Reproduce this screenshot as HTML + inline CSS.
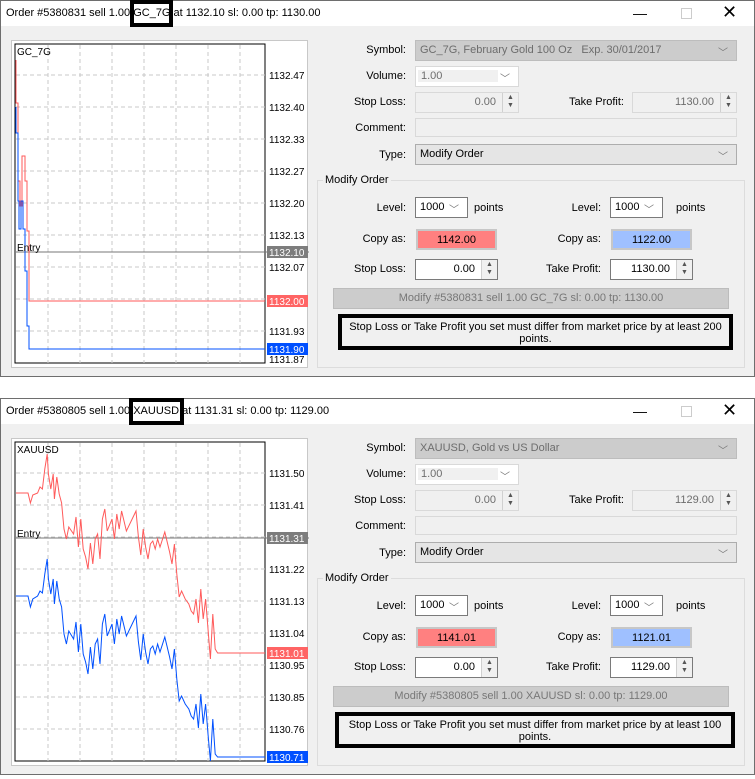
<!DOCTYPE html>
<html><head><meta charset="utf-8"><style>
*{box-sizing:border-box;margin:0;padding:0}
body{width:755px;height:779px;background:#fff;position:relative;overflow:hidden;font-family:"Liberation Sans",Arial,sans-serif;font-size:11px;color:#000}
.dlg{position:absolute;left:0;width:755px;height:377px;background:#f0f0f0;border:1px solid #6e6e6e}
.tb{position:absolute;left:0;top:0;width:753px;height:25px;background:#fff}
.tt{position:absolute;left:5px;top:6px;font-size:11px;white-space:nowrap}
.hl{position:absolute;top:-1px;height:27px;border:4px solid #000}
.a{position:absolute;white-space:nowrap}
.lab{position:absolute;text-align:right;width:120px;white-space:nowrap}
.f{position:absolute;border:1px solid #d9d9d9;background:#f0f0f0;color:#6d6d6d;padding:3px 4px;white-space:nowrap;overflow:hidden}
.dis{background:#cccccc;border-color:#bdbdbd}
.w{background:#fff;border-color:#7a7a7a;color:#000}
.sp{position:absolute;right:0;top:0;width:16px;height:100%;border-left:1px solid #d0d0d0;background:#f0f0f0;font-size:7px;line-height:8px;text-align:center;color:#555;padding-top:1px}
.chev{position:absolute;right:8px;top:3px;color:#777;font-size:10px}
.grp{position:absolute;border:1px solid #dcdcdc}
.chart{position:absolute;left:10px;top:39px;width:297px;height:328px;background:#fff;border:1px solid #c8c8c8}
.msg{position:absolute;border:4px solid #000;background:#f0f0f0;text-align:center;line-height:12px;padding-top:3px}
</style></head><body>

<!-- Dialog 1 -->
<div class="dlg" style="top:0">
 <div class="tb">
  <div class="tt">Order #5380831 sell 1.00 GC_7G at 1132.10 sl: 0.00 tp: 1130.00</div>
  <div class="hl" style="left:129px;width:43px"></div>
  <div class="a" style="left:632px;top:4px;font-size:14px">—</div>
  <div class="a" style="left:680px;top:7px;width:11px;height:11px;border:1px solid #ccc"></div>
  <div class="a" style="left:721px;top:1px;font-size:18px;font-weight:300">✕</div>
 </div>
 <div class="chart">
  <svg width="297" height="328" style="position:absolute;left:0;top:0">
   <rect x="3" y="3" width="250" height="319" fill="#fff" stroke="#000"/>
   <g stroke="#c8c8c8" stroke-dasharray="4,3">
    <line x1="36" y1="4" x2="36" y2="322"/><line x1="68" y1="4" x2="68" y2="322"/><line x1="100" y1="4" x2="100" y2="322"/><line x1="132" y1="4" x2="132" y2="322"/><line x1="164" y1="4" x2="164" y2="322"/><line x1="196" y1="4" x2="196" y2="322"/><line x1="228" y1="4" x2="228" y2="322"/>
    <line x1="4" y1="34" x2="253" y2="34"/><line x1="4" y1="66" x2="253" y2="66"/><line x1="4" y1="98" x2="253" y2="98"/><line x1="4" y1="130" x2="253" y2="130"/><line x1="4" y1="162" x2="253" y2="162"/><line x1="4" y1="194" x2="253" y2="194"/><line x1="4" y1="226" x2="253" y2="226"/><line x1="4" y1="258" x2="253" y2="258"/><line x1="4" y1="290" x2="253" y2="290"/>
   </g>
   <line x1="4" y1="211" x2="297" y2="211" stroke="#777"/>
   <polyline fill="none" stroke="#ff5a5a" points="4,19 4,62 6,62 6,140 8,140 8,165 10,165 10,115 13,115 13,140 15,140 15,190 17,190 17,260 253,260"/>
   <polyline fill="none" stroke="#0050ff" points="4,66 4,92 6,92 6,160 7,160 7,188 9,188 9,160 11,160 11,188 13,188 13,230 15,230 15,285 17,285 17,308 253,308"/>
   <g font-size="10" font-family="Liberation Sans" fill="#000">
    <text x="5" y="14">GC_7G</text><text x="5" y="210">Entry</text>
    <text x="257" y="38">1132.47</text><text x="257" y="70">1132.40</text><text x="257" y="102">1132.33</text><text x="257" y="134">1132.27</text><text x="257" y="166">1132.20</text><text x="257" y="198">1132.13</text><text x="257" y="230">1132.07</text><text x="257" y="294">1131.93</text><text x="257" y="322">1131.87</text>
    <rect x="255" y="205" width="41" height="12" fill="#7d7d7d"/><text x="257" y="215" fill="#fff">1132.10</text>
    <rect x="255" y="254" width="41" height="12" fill="#ff6464"/><text x="257" y="264" fill="#fff">1132.00</text>
    <rect x="255" y="302" width="41" height="12" fill="#0050ff"/><text x="257" y="312" fill="#fff">1131.90</text>
   </g>
  </svg>
 </div>
 <div class="lab" style="left:285px;top:43px">Symbol:</div>
 <div class="f dis" style="left:414px;top:39px;width:322px;height:21px">GC_7G, February Gold 100 Oz &nbsp; Exp. 30/01/2017<span class="chev">﹀</span></div>
 <div class="lab" style="left:285px;top:69px">Volume:</div>
 <div class="f" style="left:414px;top:65px;width:104px;height:21px;background:#fff"><span style="background:#f0f0f0;display:inline-block;width:80px;padding-left:3px;margin-left:-2px">1.00</span><span class="chev">﹀</span></div>
 <div class="lab" style="left:285px;top:95px">Stop Loss:</div>
 <div class="f" style="left:414px;top:91px;width:104px;height:21px;text-align:right;padding-right:22px">0.00<div class="sp">▲<br>▼</div></div>
 <div class="lab" style="left:503px;top:95px">Take Profit:</div>
 <div class="f" style="left:631px;top:91px;width:105px;height:21px;text-align:right;padding-right:22px">1130.00<div class="sp">▲<br>▼</div></div>
 <div class="lab" style="left:285px;top:121px">Comment:</div>
 <div class="f" style="left:414px;top:117px;width:322px;height:19px"></div>
 <div class="lab" style="left:285px;top:148px">Type:</div>
 <div class="f" style="left:414px;top:143px;width:322px;height:21px;background:#e5e5e5;border-color:#adadad;color:#000">Modify Order<span class="chev">﹀</span></div>
 <div class="grp" style="left:316px;top:179px;width:428px;height:188px"></div>
 <div class="a" style="left:322px;top:173px;background:#f0f0f0;padding:0 2px">Modify Order</div>
 <div class="lab" style="left:285px;top:201px">Level:</div>
 <div class="f w" style="left:414px;top:196px;width:53px;height:21px">1000<span class="chev">﹀</span></div>
 <div class="a" style="left:473px;top:201px">points</div>
 <div class="lab" style="left:480px;top:201px">Level:</div>
 <div class="f w" style="left:609px;top:196px;width:53px;height:21px">1000<span class="chev">﹀</span></div>
 <div class="a" style="left:675px;top:201px">points</div>
 <div class="lab" style="left:285px;top:232px">Copy as:</div>
 <div class="f" style="left:415px;top:228px;width:81px;height:21px;background:#ff8080;border:2px solid #c7c7c7;color:#000;text-align:center">1142.00</div>
 <div class="lab" style="left:480px;top:232px">Copy as:</div>
 <div class="f" style="left:610px;top:228px;width:81px;height:21px;background:#9fc0ff;border:2px solid #c7c7c7;color:#000;text-align:center">1122.00</div>
 <div class="lab" style="left:285px;top:262px">Stop Loss:</div>
 <div class="f w" style="left:414px;top:258px;width:83px;height:21px;text-align:right;padding-right:22px">0.00<div class="sp">▲<br>▼</div></div>
 <div class="lab" style="left:480px;top:262px">Take Profit:</div>
 <div class="f w" style="left:609px;top:258px;width:83px;height:21px;text-align:right;padding-right:22px">1130.00<div class="sp">▲<br>▼</div></div>
 <div class="f" style="left:332px;top:287px;width:396px;height:21px;background:#cccccc;border-color:#bcbcbc;color:#777;text-align:center">Modify #5380831 sell 1.00 GC_7G sl: 0.00 tp: 1130.00</div>
 <div class="msg" style="left:337px;top:313px;width:395px;height:36px">Stop Loss or Take Profit you set must differ from market price by at least 200<br>points.</div>
</div>

<!-- Dialog 2 -->
<div class="dlg" style="top:398px">
 <div class="tb">
  <div class="tt">Order #5380805 sell 1.00 XAUUSD at 1131.31 sl: 0.00 tp: 1129.00</div>
  <div class="hl" style="left:128px;width:55px"></div>
  <div class="a" style="left:632px;top:4px;font-size:14px">—</div>
  <div class="a" style="left:680px;top:7px;width:11px;height:11px;border:1px solid #ccc"></div>
  <div class="a" style="left:721px;top:1px;font-size:18px;font-weight:300">✕</div>
 </div>
 <div class="chart">
  <svg width="297" height="328" style="position:absolute;left:0;top:0">
   <rect x="3" y="3" width="250" height="319" fill="#fff" stroke="#000"/>
   <g stroke="#c8c8c8" stroke-dasharray="4,3">
    <line x1="36" y1="4" x2="36" y2="322"/><line x1="68" y1="4" x2="68" y2="322"/><line x1="100" y1="4" x2="100" y2="322"/><line x1="132" y1="4" x2="132" y2="322"/><line x1="164" y1="4" x2="164" y2="322"/><line x1="196" y1="4" x2="196" y2="322"/><line x1="228" y1="4" x2="228" y2="322"/>
    <line x1="4" y1="34" x2="253" y2="34"/><line x1="4" y1="66" x2="253" y2="66"/><line x1="4" y1="98" x2="253" y2="98"/><line x1="4" y1="130" x2="253" y2="130"/><line x1="4" y1="162" x2="253" y2="162"/><line x1="4" y1="194" x2="253" y2="194"/><line x1="4" y1="226" x2="253" y2="226"/><line x1="4" y1="258" x2="253" y2="258"/><line x1="4" y1="290" x2="253" y2="290"/>
   </g>
   <line x1="4" y1="99" x2="297" y2="99" stroke="#777"/>
   <g transform="translate(-0.8,0) scale(1.2,1)">
   <polyline fill="none" stroke="#ff5a5a" vector-effect="non-scaling-stroke" points="4,54 14,54 16,64 18,56 22,54 24,48 26,50 28,30 30,15 31,35 33,50 35,35 36,60 38,38 40,55 42,64 44,90 46,100 48,88 52,95 54,78 56,108 58,80 60,110 62,118 64,130 66,104 68,125 70,100 72,95 74,120 76,80 78,70 80,92 84,80 86,100 88,75 90,90 92,72 96,92 100,82 104,72 106,98 108,116 110,90 112,108 114,120 116,105 118,102 120,110 122,100 124,108 128,93 132,113 134,125 136,105 138,135 140,158 142,152 145,160 148,165 150,172 152,175 154,160 156,184 158,150 160,180 162,160 164,190 166,220 168,175 170,210 172,214 211.5,214"/>
   <polyline fill="none" stroke="#0050ff" vector-effect="non-scaling-stroke" points="4,157 14,157 16,168 18,160 22,157 24,152 26,154 28,135 30,120 31,140 33,155 35,140 36,165 38,142 40,160 42,168 44,195 46,205 48,192 52,200 54,183 56,213 58,185 60,215 62,223 64,235 66,208 68,230 70,205 72,200 74,225 76,185 78,175 80,197 84,185 86,205 88,180 90,195 92,177 96,197 100,187 104,177 106,203 108,221 110,195 112,213 114,225 116,210 118,207 120,215 122,205 124,213 128,198 132,218 134,230 136,210 138,240 140,262 142,257 145,265 148,270 150,277 152,280 154,265 156,289 158,255 160,285 162,265 164,295 166,322 168,280 170,315 172,318 211.5,318"/>
   </g>
   <g font-size="10" font-family="Liberation Sans" fill="#000">
    <text x="5" y="14">XAUUSD</text><text x="5" y="98">Entry</text>
    <text x="257" y="38">1131.50</text><text x="257" y="70">1131.41</text><text x="257" y="134">1131.22</text><text x="257" y="166">1131.13</text><text x="257" y="198">1131.04</text><text x="257" y="230">1130.95</text><text x="257" y="262">1130.85</text><text x="257" y="294">1130.76</text><text x="257" y="322">1130.67</text>
    <rect x="255" y="93" width="41" height="12" fill="#7d7d7d"/><text x="257" y="103" fill="#fff">1131.31</text>
    <rect x="255" y="208" width="41" height="12" fill="#ff6464"/><text x="257" y="218" fill="#fff">1131.01</text>
    <rect x="255" y="312" width="41" height="12" fill="#0050ff"/><text x="257" y="322" fill="#fff">1130.71</text>
   </g>
  </svg>
 </div>
 <div class="lab" style="left:285px;top:43px">Symbol:</div>
 <div class="f dis" style="left:414px;top:39px;width:322px;height:21px">XAUUSD, Gold vs US Dollar<span class="chev">﹀</span></div>
 <div class="lab" style="left:285px;top:69px">Volume:</div>
 <div class="f" style="left:414px;top:65px;width:104px;height:21px;background:#fff"><span style="background:#f0f0f0;display:inline-block;width:80px;padding-left:3px;margin-left:-2px">1.00</span><span class="chev">﹀</span></div>
 <div class="lab" style="left:285px;top:95px">Stop Loss:</div>
 <div class="f" style="left:414px;top:91px;width:104px;height:21px;text-align:right;padding-right:22px">0.00<div class="sp">▲<br>▼</div></div>
 <div class="lab" style="left:503px;top:95px">Take Profit:</div>
 <div class="f" style="left:631px;top:91px;width:105px;height:21px;text-align:right;padding-right:22px">1129.00<div class="sp">▲<br>▼</div></div>
 <div class="lab" style="left:285px;top:121px">Comment:</div>
 <div class="f" style="left:414px;top:117px;width:322px;height:19px"></div>
 <div class="lab" style="left:285px;top:148px">Type:</div>
 <div class="f" style="left:414px;top:143px;width:322px;height:21px;background:#e5e5e5;border-color:#adadad;color:#000">Modify Order<span class="chev">﹀</span></div>
 <div class="grp" style="left:316px;top:179px;width:428px;height:188px"></div>
 <div class="a" style="left:322px;top:173px;background:#f0f0f0;padding:0 2px">Modify Order</div>
 <div class="lab" style="left:285px;top:201px">Level:</div>
 <div class="f w" style="left:414px;top:196px;width:53px;height:21px">1000<span class="chev">﹀</span></div>
 <div class="a" style="left:473px;top:201px">points</div>
 <div class="lab" style="left:480px;top:201px">Level:</div>
 <div class="f w" style="left:609px;top:196px;width:53px;height:21px">1000<span class="chev">﹀</span></div>
 <div class="a" style="left:675px;top:201px">points</div>
 <div class="lab" style="left:285px;top:232px">Copy as:</div>
 <div class="f" style="left:415px;top:228px;width:81px;height:21px;background:#ff8080;border:2px solid #c7c7c7;color:#000;text-align:center">1141.01</div>
 <div class="lab" style="left:480px;top:232px">Copy as:</div>
 <div class="f" style="left:610px;top:228px;width:81px;height:21px;background:#9fc0ff;border:2px solid #c7c7c7;color:#000;text-align:center">1121.01</div>
 <div class="lab" style="left:285px;top:262px">Stop Loss:</div>
 <div class="f w" style="left:414px;top:258px;width:83px;height:21px;text-align:right;padding-right:22px">0.00<div class="sp">▲<br>▼</div></div>
 <div class="lab" style="left:480px;top:262px">Take Profit:</div>
 <div class="f w" style="left:609px;top:258px;width:83px;height:21px;text-align:right;padding-right:22px">1129.00<div class="sp">▲<br>▼</div></div>
 <div class="f" style="left:332px;top:287px;width:396px;height:21px;background:#cccccc;border-color:#bcbcbc;color:#777;text-align:center">Modify #5380805 sell 1.00 XAUUSD sl: 0.00 tp: 1129.00</div>
 <div class="msg" style="left:334px;top:313px;width:400px;height:36px">Stop Loss or Take Profit you set must differ from market price by at least 100<br>points.</div>
</div>
</body></html>
